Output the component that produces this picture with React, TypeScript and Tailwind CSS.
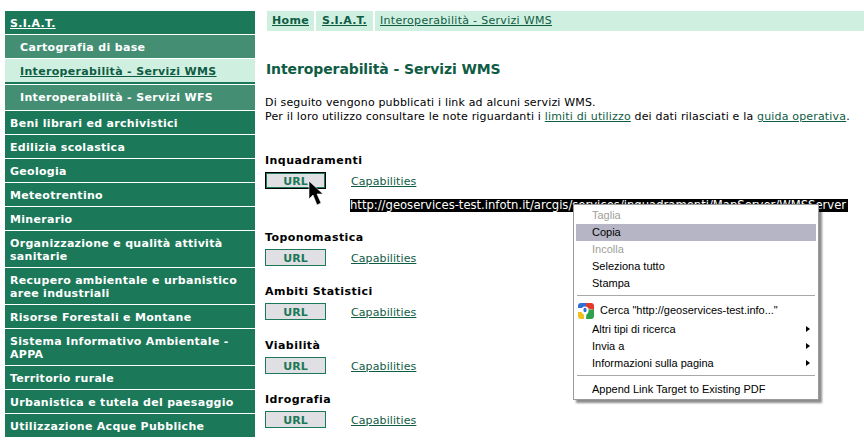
const font = "font-['DejaVu_Sans',Verdana,sans-serif]";

type NavItem = { label: string; kind?: "top" | "sub" | "active" };

const navItems: NavItem[] = [
  { label: "S.I.A.T.", kind: "top" },
  { label: "Cartografia di base", kind: "sub" },
  { label: "Interoperabilità - Servizi WMS", kind: "active" },
  { label: "Interoperabilità - Servizi WFS", kind: "sub" },
  { label: "Beni librari ed archivistici" },
  { label: "Edilizia scolastica" },
  { label: "Geologia" },
  { label: "Meteotrentino" },
  { label: "Minerario" },
  { label: "Organizzazione e qualità attività sanitarie" },
  { label: "Recupero ambientale e urbanistico aree industriali" },
  { label: "Risorse Forestali e Montane" },
  { label: "Sistema Informativo Ambientale - APPA" },
  { label: "Territorio rurale" },
  { label: "Urbanistica e tutela del paesaggio" },
  { label: "Utilizzazione Acque Pubbliche" },
];

function NavRow({ item }: { item: NavItem }) {
  if (item.kind === "active") {
    return (
      <a className="block h-[25px] border-b-2 border-[#1b7858] bg-[#cff0e0] pl-[15px] pt-[5px] text-[11px] leading-[15px] font-bold tracking-[0.33px] text-[#0f5c44] underline">
        {item.label}
      </a>
    );
  }
  if (item.kind === "sub") {
    const tall = item.label.endsWith("WFS");
    return (
      <a className={`block bg-[#448f74] pl-[15px] pt-[5px] text-[11px] leading-[15px] font-bold tracking-[0.33px] text-white ${tall ? "h-[25px]" : "h-[23px]"}`}>
        {item.label}
      </a>
    );
  }
  return (
    <a className={`block bg-[#1b7858] px-[5px] pt-[6px] pb-[4px] text-[11px] leading-[13px] font-bold tracking-[0.3px] text-white ${item.kind === "top" ? "underline" : ""}`}>
      {item.label}
    </a>
  );
}

function Section({ title, focused, children }: { title: string; focused?: boolean; children?: React.ReactNode }) {
  return (
    <section>
      <h3 className="h-[15px] text-[11px] leading-[15px] font-bold tracking-[0.45px] text-black">{title}</h3>
      <div className="mt-[4px] flex h-[17px] items-start">
        <button
          className={`h-[17px] w-[61px] border bg-[#e0e0e4] pt-[2px] text-[11px] leading-[13px] font-bold text-[#1b7858] ${focused ? "border-black outline outline-1 -outline-offset-2 outline-[#1b7858]" : "border-[#1b7858]"}`}
        >
          URL
        </button>
        <a className="ml-[25px] mt-[2px] text-[11px] leading-[15px] tracking-[0.1px] text-[#0f5c44] underline">Capabilities</a>
      </div>
      {children}
    </section>
  );
}

function MenuRow({ label, disabled, active, arrow }: { label: string; disabled?: boolean; active?: boolean; arrow?: boolean }) {
  return (
    <div
      className={`relative flex h-[17px] items-center pl-[16px] text-[11px] ${active ? "bg-[#b5b5c5] text-black" : disabled ? "text-[#a0a098]" : "text-black"}`}
    >
      {label}
      {arrow && <span className="absolute right-[6px] top-[5px] h-0 w-0 border-y-[3.5px] border-l-[4px] border-y-transparent border-l-black" />}
    </div>
  );
}

function ContextMenu() {
  return (
    <div className="absolute left-[573px] top-[204px] w-[246px] border border-[#9a9a9a] bg-white px-[2px] pt-[2px] pb-[1px] font-['Liberation_Sans',sans-serif] shadow-[3px_3px_2px_rgba(0,0,0,0.45)]">
      <MenuRow label="Taglia" disabled />
      <MenuRow label="Copia" active />
      <MenuRow label="Incolla" disabled />
      <MenuRow label="Seleziona tutto" />
      <MenuRow label="Stampa" />
      <div className="mx-[1px] mt-[3px] mb-[4px] h-px bg-[#a8a8a8]" />
      <div className="flex h-[21px] items-center pl-[2px] text-[11px] text-black">
        <svg width="16" height="16" viewBox="0 0 16 16" className="mr-[6px]">
          <path d="M0 3a3 3 0 0 1 3-3h5v5H0z" fill="#2f6fd6" />
          <path d="M8 0h5a3 3 0 0 1 3 3v4L8 5z" fill="#e03a2a" />
          <path d="M9 6l7 1v6a3 3 0 0 1-3 3H8z" fill="#2da24a" />
          <path d="M0 9h6v7H3a3 3 0 0 1-3-3z" fill="#f2c01e" />
          <ellipse cx="7" cy="7.5" rx="3.6" ry="4" fill="#fff" />
          <ellipse cx="7" cy="7" rx="1.6" ry="2.2" fill="#2f6fd6" />
        </svg>
        Cerca "http://geoservices-test.info..."
      </div>
      <MenuRow label="Altri tipi di ricerca" arrow />
      <MenuRow label="Invia a" arrow />
      <MenuRow label="Informazioni sulla pagina" arrow />
      <div className="mx-[1px] mt-[3px] mb-[5px] h-px bg-[#a8a8a8]" />
      <MenuRow label="Append Link Target to Existing PDF" />
    </div>
  );
}

export default function App() {
  return (
    <div className={`relative flex h-[443px] w-[864px] overflow-hidden bg-white ${font}`}>
      <nav className="ml-[5px] mt-[11px] flex w-[250px] shrink-0 flex-col gap-px">
        {navItems.map((item) => (
          <NavRow key={item.label} item={item} />
        ))}
      </nav>

      <main className="ml-[10px] min-w-0 flex-1 pt-[11px]">
        <div className="ml-[2px] flex h-[20px] gap-[2px] text-[11px] leading-[19px] text-[#0f5c44] underline">
          <a className="w-[47px] bg-[#cff0e0] text-center font-bold tracking-[0.3px]">Home</a>
          <a className="w-[57px] bg-[#cff0e0] text-center font-bold tracking-[0.2px]">S.I.A.T.</a>
          <a className="flex-1 bg-[#cff0e0] pl-[5px] tracking-[0.3px]">Interoperabilità - Servizi WMS</a>
        </div>

        <h1 className="mt-[28px] ml-px h-[20px] text-[14px] leading-[20px] font-semibold tracking-[-0.1px] text-[#0f5c44]">Interoperabilità - Servizi WMS</h1>

        <p className="mt-[17px] whitespace-nowrap text-[11px] leading-[14px] tracking-[0.17px] text-black">
          Di seguito vengono pubblicati i link ad alcuni servizi WMS.
          <br />
          Per il loro utilizzo consultare le note riguardanti i <a className="text-[#0f5c44] underline">limiti di utilizzo</a> dei dati rilasciati e la <a className="text-[#0f5c44] underline">guida operativa</a>.
        </p>

        <div className="mt-[29px] flex flex-col gap-[18px]">
          <Section title="Inquadramenti" focused>
            <div className="ml-[85px] mt-[10px] h-[13px] w-[498px] whitespace-nowrap bg-black text-[11.6px] leading-[13px] text-white">
              http://geoservices-test.infotn.it/arcgis/services/inquadramenti/MapServer/WMSServer
            </div>
          </Section>
          <Section title="Toponomastica" />
          <Section title="Ambiti Statistici" />
          <Section title="Viabilità" />
          <Section title="Idrografia" />
        </div>
      </main>

      <svg width="18" height="27" viewBox="0 0 18 27" className="absolute left-[308px] top-[180px]">
        <path d="M1 1v18l4-4 4 10 4-2-4-9h6z" fill="#000" stroke="#fff" strokeWidth="0.6" />
      </svg>

      <ContextMenu />
    </div>
  );
}
